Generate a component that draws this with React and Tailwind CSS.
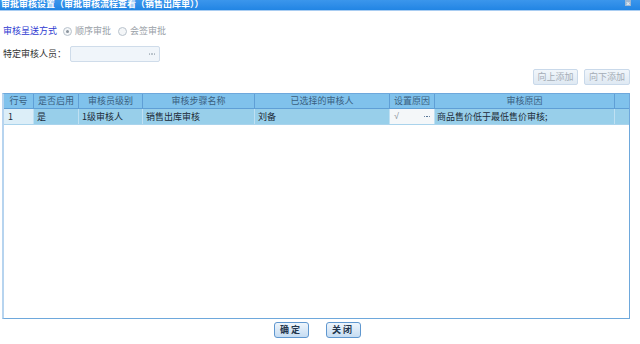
import React from "react";

const font = { fontFamily: '"Noto Sans CJK SC", "Liberation Sans", sans-serif' };
const latin = { fontFamily: '"Liberation Sans", sans-serif' };

const cols = [
  { key: "no", title: "行号", w: "w-[30px]" },
  { key: "on", title: "是否启用", w: "w-[45px]" },
  { key: "lvl", title: "审核员级别", w: "w-[64px]" },
  { key: "step", title: "审核步骤名称", w: "w-[112px]" },
  { key: "who", title: "已选择的审核人", w: "w-[135px]" },
  { key: "set", title: "设置原因", w: "w-[45px]" },
  { key: "why", title: "审核原因", w: "w-[180px]" },
];

function Radio({ checked }) {
  return (
    <span className="inline-flex h-[9px] w-[9px] items-center justify-center rounded-full border border-[#b9c3cc] bg-[#f4f6f8]">
      {checked && <span className="h-[3px] w-[3px] rounded-full bg-[#8a939c]" />}
    </span>
  );
}

function Dots({ className = "" }) {
  return (
    <span className={`flex items-center gap-[1px] ${className}`}>
      <span className="h-[1.5px] w-[1.5px] rounded-full bg-current" />
      <span className="h-[1.5px] w-[1.5px] rounded-full bg-current" />
      <span className="h-[1.5px] w-[1.5px] rounded-full bg-current" />
    </span>
  );
}

function SmallBtn({ children, className = "" }) {
  return (
    <button
      className={`flex h-[16px] items-center justify-center rounded-[2px] border border-[#c9d9ea] bg-gradient-to-b from-[#f1f6fb] to-[#dfe9f3] text-[9px] text-[#a5adb6] ${className}`}
    >
      {children}
    </button>
  );
}

function FootBtn({ children }) {
  return (
    <button className="flex h-[16px] w-[35px] items-center justify-center rounded-[3px] border border-[#5f97cf] bg-gradient-to-b from-[#eef5fc] to-[#c5dcf2] text-[9px] font-bold tracking-[2px] text-[#23364d]">
      {children}
    </button>
  );
}

export default function App() {
  return (
    <div className="h-[344px] w-[640px] overflow-hidden bg-white text-[9px] text-[#222]" style={font}>
      {/* title bar */}
      <div className="flex h-[11px] items-start justify-between overflow-hidden border-b border-[#a9cdf2] bg-gradient-to-b from-[#3b96ec] to-[#2185e4]">
        <span className="-mt-[2px] pl-[1px] text-[9px] font-bold leading-[11px] text-white">
          审批审核设置（审批审核流程查看（销售出库单））
        </span>
        <span
          className="mr-[9px] mt-0 flex h-[6px] w-[6px] items-center justify-center bg-[#9db7d2] text-[7px] leading-none text-white"
          style={latin}
        >
          ×
        </span>
      </div>

      {/* options */}
      <div className="mt-[13px] flex h-[14px] items-center pl-[3px]">
        <span className="text-[#2f3bd1]">审核呈送方式</span>
        <span className="ml-[6px] flex items-center gap-[3px] text-[#9aa1a8]">
          <Radio checked /> 顺序审批
        </span>
        <span className="ml-[7px] flex items-center gap-[3px] text-[#9aa1a8]">
          <Radio /> 会签审批
        </span>
      </div>

      <div className="mt-[8px] flex h-[16px] items-center pl-[3px]">
        <span className="w-[67px] text-[#333]">特定审核人员：</span>
        <div className="flex h-[16px] w-[90px] items-center justify-end rounded-[2px] border border-[#cfdcea] bg-[#f0f5fa] pr-[4px]">
          <Dots className="text-[#aab4be]" />
        </div>
      </div>

      <div className="mt-[7px] flex justify-end gap-[6px] pr-[10px]">
        <SmallBtn className="w-[45px]">向上添加</SmallBtn>
        <SmallBtn className="w-[46px]">向下添加</SmallBtn>
      </div>

      {/* grid */}
      <div className="ml-[2px] mt-[8px] flex h-[226px] w-[628px] flex-col border border-[#6ea8dc] border-l-[2px] border-l-[#b7d4ef]">
        <div className="flex h-[15px] border-b border-[#5f9fd6] bg-[#80c2ec] text-[#3a5f80]">
          {cols.map((c) => (
            <div key={c.key} className={`${c.w} flex items-center justify-center border-r border-[#5f9fd6]`}>
              {c.title}
            </div>
          ))}
          <div className="flex-1" />
        </div>
        <div className="flex h-[16px] border-b border-[#a9d3ec] bg-[#98cfea] text-[#1b2a38]">
          <div className="flex w-[30px] items-center border-r border-[#bfe0f2] bg-[#dceef8] pl-[4px]">1</div>
          <div className="flex w-[45px] items-center border-r border-[#bfe0f2] pl-[3px]">是</div>
          <div className="flex w-[64px] items-center border-r border-[#bfe0f2] pl-[3px]">1级审核人</div>
          <div className="flex w-[112px] items-center border-r border-[#bfe0f2] pl-[3px]">销售出库审核</div>
          <div className="flex w-[135px] items-center border-r border-[#bfe0f2] pl-[3px]">刘备</div>
          <div className="flex w-[45px] items-center justify-between border-r border-[#bfe0f2] bg-[#f4f7f9] px-[4px] text-[#8a939b]">
            <span style={latin}>√</span>
            <Dots className="text-[#3f6288]" />
          </div>
          <div className="flex w-[180px] items-center border-r border-[#bfe0f2] pl-[2px]">商品售价低于最低售价审核;</div>
          <div className="flex-1" />
        </div>
        <div className="flex-1" />
      </div>

      <div className="mt-[3px] flex justify-center gap-[17px] pr-[6px]">
        <FootBtn>确定</FootBtn>
        <FootBtn>关闭</FootBtn>
      </div>
    </div>
  );
}
